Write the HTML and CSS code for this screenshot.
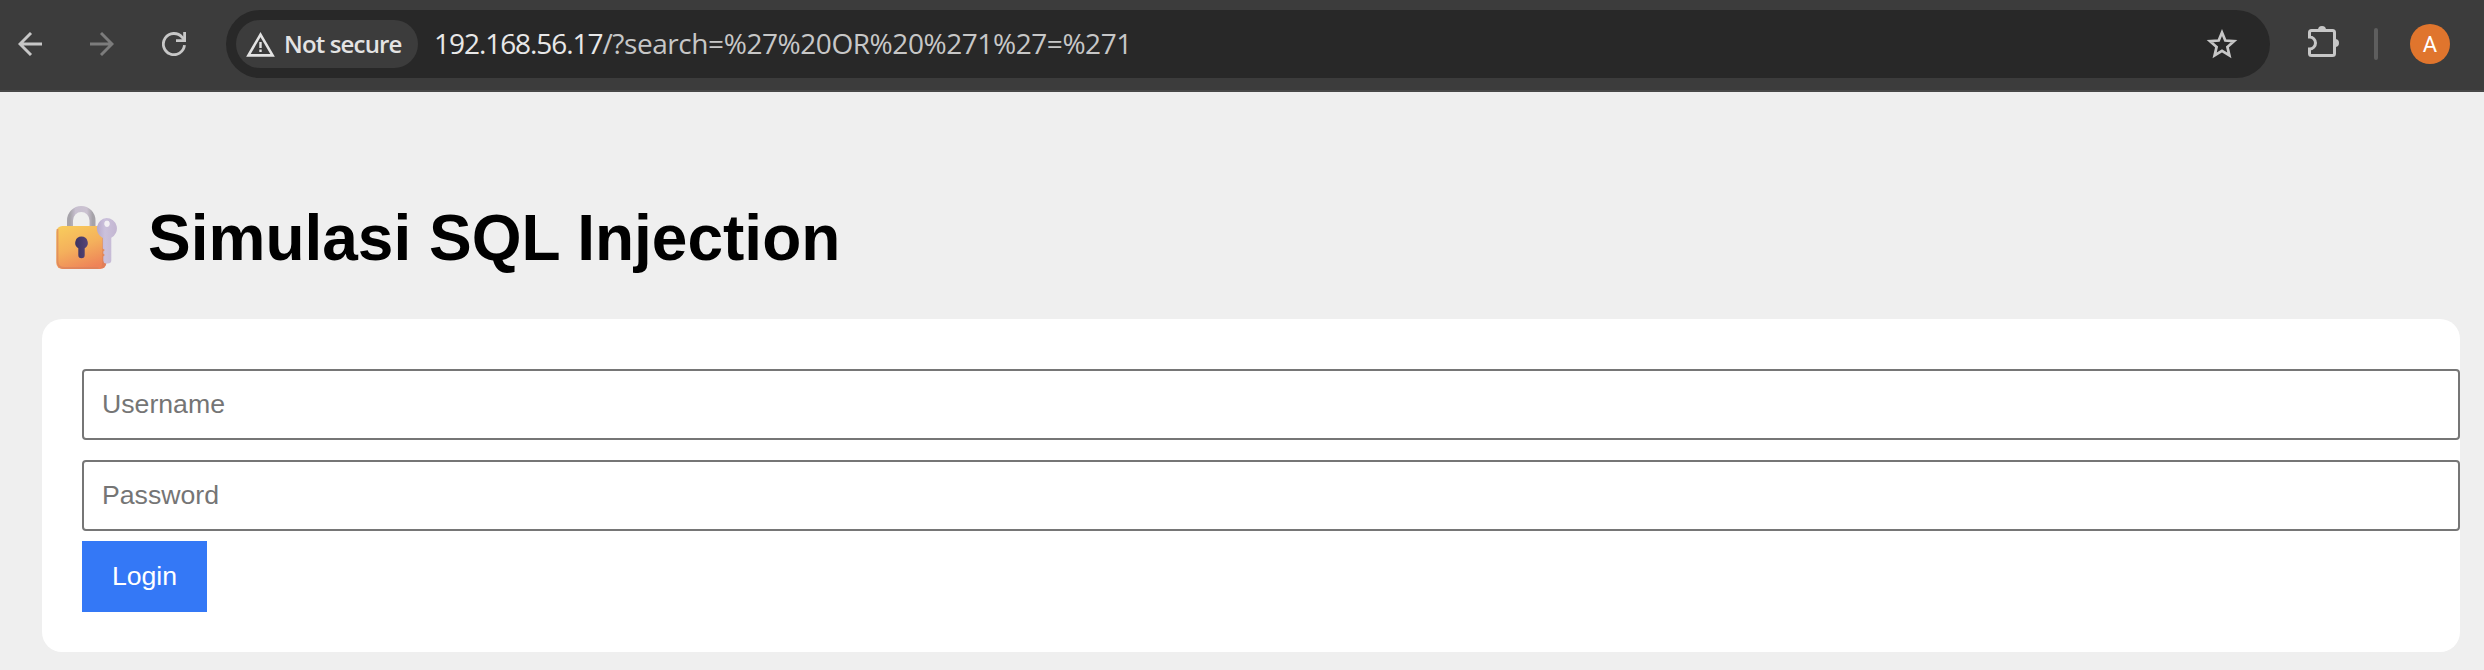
FILE: index.html
```html
<!DOCTYPE html>
<html lang="id">
<head>
<meta charset="utf-8">
<title>Simulasi SQL Injection</title>
<link rel="stylesheet" href="styles.css">
</head>
<body>
<header class="toolbar">
  <nav class="nav">
    <svg class="nav-icon" viewBox="0 0 24 24"><path d="M24 12H2M13 1L2 12l11 11" fill="none" stroke="#c7c7c7" stroke-width="2.9"/></svg>
    <svg class="nav-icon" viewBox="0 0 24 24"><path d="M0 12h22M11 1l11 11-11 11" fill="none" stroke="#7c7c7c" stroke-width="2.9"/></svg>
    <svg class="nav-icon" viewBox="0 0 24 24"><path d="M22.5 13.2A10.6 10.6 0 1 1 20 5.2L22.5 8" fill="none" stroke="#c7c7c7" stroke-width="2.8"/><path d="M21.2 0H24v10H14V7.2h7.2z" fill="#c7c7c7"/></svg>
  </nav>
  <div class="address">
    <div class="chip">
      <svg class="warn" viewBox="0 0 29 25"><path d="M14.5 2.6L26.6 23.4H2.4z" fill="none" stroke="#e3e3e3" stroke-width="2.6"/><path d="M13.3 10h2.4v6h-2.4zM13.3 17.6h2.4V20h-2.4z" fill="#e3e3e3"/></svg>
      <span class="chip-text">Not secure</span>
    </div>
    <div class="url"><span class="host">192.168.56.17</span><span class="path">/?search=%27%20OR%20%271%27=%271</span></div>
    <svg class="star" viewBox="0 0 32 30"><path d="M16 3.5l3.3 8 8.7.7-6.6 5.7 2 8.5L16 21.9l-7.4 4.5 2-8.5L4 12.2l8.700-.7z" fill="none" stroke="#c7c7c7" stroke-width="2.7"/></svg>
  </div>
  <svg class="puzzle" viewBox="0 0 34 34"><path d="M3.500 7.500Q3.500 5.500 5.500 5.500H26.500Q28.500 5.500 28.500 7.500V28.500Q28.500 30.500 26.500 30.500H5.500Q3.500 30.500 3.500 28.500V24A6 6 0 0 0 3.500 12z" fill="none" stroke="#c7c7c7" stroke-width="3"/><path d="M12 5a4 4 0 0 1 8 0zM29 14a4 4 0 0 1 0 8z" fill="#c7c7c7"/></svg>
  <span class="divider"></span>
  <span class="avatar">A</span>
</header>
<main class="page">
  <h1 class="title">
    <svg class="lock" viewBox="0 0 88 74">
      <defs>
        <linearGradient id="gold" x1="0.2" y1="0" x2="0.6" y2="1"><stop offset="0" stop-color="#f8ca5c"/><stop offset="0.5" stop-color="#f4b05c"/><stop offset="1" stop-color="#ee8358"/></linearGradient>
        <linearGradient id="steel" x1="0" y1="0" x2="1" y2="0"><stop offset="0" stop-color="#a6a3aa"/><stop offset="0.25" stop-color="#c8c0d0"/><stop offset="0.75" stop-color="#cbc2d1"/><stop offset="1" stop-color="#a5a2a8"/></linearGradient>
        <linearGradient id="lilac" x1="0" y1="0" x2="1" y2="0"><stop offset="0" stop-color="#b7a9cb"/><stop offset="0.4" stop-color="#cbc1dc"/><stop offset="1" stop-color="#c3b6d1"/></linearGradient>
        <linearGradient id="hole" x1="0" y1="0" x2="1" y2="0"><stop offset="0" stop-color="#3c3461"/><stop offset="1" stop-color="#574477"/></linearGradient>
      </defs>
      <path d="M28 29V19.500a11.250 11.500 0 0 1 22.500 0V29" fill="none" stroke="url(#steel)" stroke-width="6"/>
      <g transform="translate(0 3)">
        <rect x="14.300" y="22" width="50" height="43" rx="6" fill="url(#gold)"/>
        <path d="M15.500 25v32q0 7 7 7h34" fill="none" stroke="#d9815c" stroke-width="1.800" opacity=".65"/>
        <path d="M39.500 32.500a6.300 6.300 0 0 1 3.200 11.700V51a3.200 3.200 0 0 1-6.400 0v-6.800a6.300 6.300 0 0 1 3.200-11.700z" fill="url(#hole)"/>
        <path d="M60 32v29q0 2-2 3h2.300q4-1 4-5V35z" fill="#ce795b" opacity=".4"/>
        <path fill-rule="evenodd" d="M64.500 14a10.500 10.500 0 0 1 4.800 19.800V56.500q0 3-3.600 3h-1.800q-2.600-.5-2.600-3v-4l1.500-1.500-1.500-1.500v-2l1.500-1.500-2-1.500V33.900A10.500 10.500 0 0 1 64.500 14zM65 16.800a2.500 3 0 0 0 0 6 2.500 3 0 0 0 0-6z" fill="url(#lilac)"/>
        <ellipse cx="65" cy="19.800" rx="2.500" ry="3" fill="#f3f0f4"/>
      </g>
    </svg>
    <span>Simulasi SQL Injection</span>
  </h1>
  <form class="card">
    <input class="field" type="text" placeholder="Username">
    <input class="field" type="password" placeholder="Password">
    <button class="login" type="button">Login</button>
  </form>
</main>
</body>
</html>
```
FILE: styles.css
```css
* { box-sizing: border-box; }
body {
  margin: 0;
  height: 670px;
  overflow: hidden;
  background: #efefef;
  font-family: "Liberation Sans", Arial, sans-serif;
}
svg { display: block; flex: none; }
.toolbar {
  display: flex;
  align-items: center;
  height: 92px;
  padding: 0 34px 4px 18px;
  background: #3c3c3c;
  border-bottom: 2px solid #474747;
}
.nav { display: flex; gap: 48px; padding-top: 2px; }
.nav-icon { width: 24px; height: 24px; }
.address {
  display: flex;
  align-items: center;
  width: 2044px;
  height: 68px;
  margin: 2px 0 0 40px;
  padding: 0 32px 0 10px;
  border-radius: 34px;
  background: #282828;
}
.chip {
  display: flex;
  align-items: center;
  width: 182px;
  height: 48px;
  padding-left: 10px;
  border-radius: 24px;
  background: #3c3c3c;
}
.warn { width: 29px; height: 25px; }
.chip-text {
  margin-left: 9px;
  color: #e3e3e3;
  font: 600 24px/32px "Open Sans", "Noto Sans", sans-serif;
  letter-spacing: -0.85px;
  white-space: nowrap;
}
.url {
  flex: 1;
  margin-left: 16px;
  padding-bottom: 2px;
  font: 28px/38px "Open Sans", "Noto Sans", sans-serif;
  white-space: nowrap;
}
.host { color: #e8e8e8; letter-spacing: -1.05px; }
.path { color: #c7c7c7; letter-spacing: -0.43px; }
.star { width: 32px; height: 30px; }
.puzzle { width: 34px; height: 34px; margin: 0 0 2px 36px; }
.divider {
  width: 4px;
  height: 32px;
  margin: 2px 0 0 34px;
  border-radius: 2px;
  background: #5e5e5e;
}
.avatar {
  width: 40px;
  height: 40px;
  margin: 2px 0 0 32px;
  border-radius: 50%;
  background: #e0752d;
  color: #fff;
  font: 22px/41px Roboto, sans-serif;
  text-align: center;
}
.page { padding: 109px 24px 0 42px; }
.title {
  display: flex;
  align-items: center;
  gap: 18px;
  height: 74px;
  margin: 0 0 44px;
  color: #000;
  font-size: 64px;
  font-weight: 700;
  line-height: 74px;
}
.lock { width: 88px; height: 74px; }
.card {
  display: flex;
  flex-direction: column;
  align-items: flex-start;
  height: 333px;
  padding: 50px 0 40px 40px;
  border-radius: 20px;
  background: #fff;
}
.field {
  width: 100%;
  height: 71px;
  margin: 0 0 20px;
  padding: 0 18px 1px;
  border: 2px solid #767676;
  border-radius: 4px;
  background: #fff;
  font: 26.67px "Liberation Sans", Arial, sans-serif;
}
.field::placeholder { color: #757575; opacity: 1; }
.login {
  width: 125px;
  height: 71px;
  margin-top: -10px;
  padding: 0 0 1px;
  border: 0;
  background: #3478f6;
  color: #fff;
  font: 26.67px "Liberation Sans", Arial, sans-serif;
}
```
